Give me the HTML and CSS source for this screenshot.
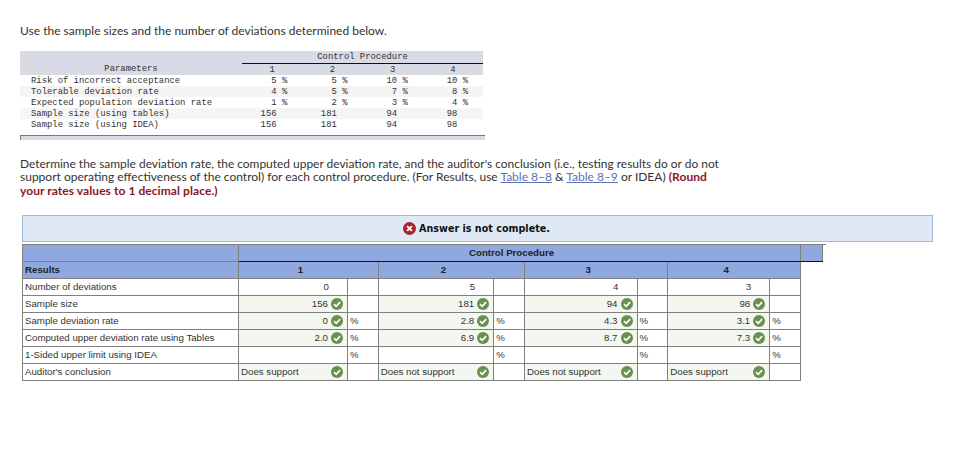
FILE: index.html
```
<!DOCTYPE html>
<html lang="en">
<head>
<meta charset="utf-8">
<title>Control procedure results</title>
<link rel="stylesheet" href="styles.css">
</head>
<body>
<svg class="defs" width="0" height="0" aria-hidden="true">
  <symbol id="ok" viewBox="0 0 12 12">
    <circle cx="6" cy="6" r="6" fill="#68904f"/>
    <path d="M3 6.2 5.2 8.3 9.1 4.1" fill="none" stroke="#fff" stroke-width="1.7"/>
  </symbol>
  <symbol id="no" viewBox="0 0 12 12">
    <circle cx="6" cy="6" r="6" fill="#a8232f"/>
    <path d="M3.8 3.8 8.2 8.2M8.2 3.8 3.8 8.2" fill="none" stroke="#fff" stroke-width="1.8"/>
  </symbol>
</svg>
<main class="page">
  <p class="intro">Use the sample sizes and the number of deviations determined below.</p>

  <table class="params">
    <colgroup><col class="p-label"><col class="p-num"><col class="p-num"><col class="p-num"><col class="p-num"></colgroup>
    <thead>
      <tr class="shade"><th></th><th colspan="4" class="p-group">Control Procedure</th></tr>
      <tr class="shade"><th>Parameters</th><th>1</th><th>2</th><th>3</th><th>4</th></tr>
    </thead>
    <tbody>
      <tr><td>Risk of incorrect acceptance</td><td>5 %</td><td>5 %</td><td>10 %</td><td>10 %</td></tr>
      <tr class="stripe"><td>Tolerable deviation rate</td><td>4 %</td><td>5 %</td><td>7 %</td><td>8 %</td></tr>
      <tr><td>Expected population deviation rate</td><td>1 %</td><td>2 %</td><td>3 %</td><td>4 %</td></tr>
      <tr class="stripe"><td>Sample size (using tables)</td><td>156  </td><td>181  </td><td>94  </td><td>98  </td></tr>
      <tr><td>Sample size (using IDEA)</td><td>156  </td><td>181  </td><td>94  </td><td>98  </td></tr>
    </tbody>
  </table>
  <div class="params-foot"></div>

  <p class="question"><span class="q-first">Determine the sample deviation rate, the computed upper deviation rate, and the auditor's conclusion (i.e., testing results do or do not</span><br>support operating effectiveness of the control) for each control procedure. (For Results, use <a href="#t8">Table 8–8</a> &amp; <a href="#t9">Table 8–9</a> or IDEA) <strong>(Round<br>your rates values to 1 decimal place.)</strong></p>

  <div class="banner"><svg class="icon-no"><use href="#no"/></svg><span>Answer is not complete.</span></div>

  <table class="results">
    <colgroup>
      <col class="c-label">
      <col class="c-v1"><col class="c-u">
      <col class="c-v2"><col class="c-u">
      <col class="c-v3"><col class="c-u">
      <col class="c-v4"><col class="c-u">
      <col class="c-extra">
    </colgroup>
    <thead>
      <tr>
        <th></th>
        <th colspan="8" class="group">Control Procedure</th>
        <th class="group extra"></th>
      </tr>
      <tr>
        <th class="left">Results</th>
        <th colspan="2" class="num-head">1</th>
        <th colspan="2" class="num-head">2</th>
        <th colspan="2" class="num-head">3</th>
        <th colspan="2" class="num-head">4</th>
      </tr>
    </thead>
    <tbody>
      <tr>
        <td>Number of deviations</td>
        <td class="val plain">0</td><td></td>
        <td class="val plain">5</td><td></td>
        <td class="val plain">4</td><td></td>
        <td class="val plain">3</td><td></td>
      </tr>
      <tr>
        <td>Sample size</td>
        <td class="val good"><div class="fill"><span>156</span><svg class="icon-ok"><use href="#ok"/></svg></div></td><td></td>
        <td class="val good"><div class="fill"><span>181</span><svg class="icon-ok"><use href="#ok"/></svg></div></td><td></td>
        <td class="val good"><div class="fill"><span>94</span><svg class="icon-ok"><use href="#ok"/></svg></div></td><td></td>
        <td class="val good"><div class="fill"><span>98</span><svg class="icon-ok"><use href="#ok"/></svg></div></td><td></td>
      </tr>
      <tr>
        <td>Sample deviation rate</td>
        <td class="val good"><div class="fill"><span>0</span><svg class="icon-ok"><use href="#ok"/></svg></div></td><td class="unit">%</td>
        <td class="val good"><div class="fill"><span>2.8</span><svg class="icon-ok"><use href="#ok"/></svg></div></td><td class="unit">%</td>
        <td class="val good"><div class="fill"><span>4.3</span><svg class="icon-ok"><use href="#ok"/></svg></div></td><td class="unit">%</td>
        <td class="val good"><div class="fill"><span>3.1</span><svg class="icon-ok"><use href="#ok"/></svg></div></td><td class="unit">%</td>
      </tr>
      <tr>
        <td>Computed upper deviation rate using Tables</td>
        <td class="val good"><div class="fill"><span>2.0</span><svg class="icon-ok"><use href="#ok"/></svg></div></td><td class="unit">%</td>
        <td class="val good"><div class="fill"><span>6.9</span><svg class="icon-ok"><use href="#ok"/></svg></div></td><td class="unit">%</td>
        <td class="val good"><div class="fill"><span>8.7</span><svg class="icon-ok"><use href="#ok"/></svg></div></td><td class="unit">%</td>
        <td class="val good"><div class="fill"><span>7.3</span><svg class="icon-ok"><use href="#ok"/></svg></div></td><td class="unit">%</td>
      </tr>
      <tr>
        <td>1-Sided upper limit using IDEA</td>
        <td></td><td class="unit">%</td>
        <td></td><td class="unit">%</td>
        <td></td><td class="unit">%</td>
        <td></td><td class="unit">%</td>
      </tr>
      <tr>
        <td>Auditor's conclusion</td>
        <td class="val good"><div class="fill spread"><span>Does support</span><svg class="icon-ok"><use href="#ok"/></svg></div></td><td></td>
        <td class="val good"><div class="fill spread"><span>Does not support</span><svg class="icon-ok"><use href="#ok"/></svg></div></td><td></td>
        <td class="val good"><div class="fill spread"><span>Does not support</span><svg class="icon-ok"><use href="#ok"/></svg></div></td><td></td>
        <td class="val good"><div class="fill spread"><span>Does support</span><svg class="icon-ok"><use href="#ok"/></svg></div></td><td></td>
      </tr>
    </tbody>
  </table>
</main>
</body>
</html>
```
FILE: styles.css
```
* { box-sizing: border-box; }
html, body { margin: 0; padding: 0; background: #fff; }
body { font-family: "Lato", "Liberation Sans", sans-serif; color: #333; overflow: hidden; }
.defs { display: block; height: 0; }
.page { width: 974px; height: 468px; padding: 24px 0 0 20px; }

.intro { margin: 0; font-size: 12px; line-height: 14px; height: 14px; }

.params {
  margin-top: 13px;
  width: 463px;
  border-collapse: collapse;
  table-layout: fixed;
  font-family: "Liberation Mono", monospace;
  font-size: 8.9px;
  line-height: 10px;
  color: #333;
  white-space: pre;
}
.p-label { width: 222px; }
.p-num { width: 60.25px; }
.params th, .params td { padding: 1px 0 0; height: 11px; font-weight: 400; }
.params thead th { text-align: center; }
.params thead .p-group { border-bottom: 1px solid #111; height: 12px; }
.params tbody td { text-align: right; padding-right: 15px; }
.params tbody td:first-child { text-align: left; padding: 1px 0 0 11px; }
.shade { background: #d8dbe3; }
.stripe { background: #f5f5f5; }
.params-foot {
  margin-top: 5px;
  width: 465px;
  height: 5px;
  background: #d8dbe3;
  border-top: 1px solid #777;
  border-left: 1px solid #777;
}

.question { margin: 17px 0 0; font-size: 12px; line-height: 13.5px; height: 41px; width: 760px; }
.q-first { font-size: 11.94px; }
.question a { color: #5a72b5; text-decoration: underline; }
.question strong { color: #8c1526; font-weight: 700; letter-spacing: 0.07px; }

.banner {
  margin: 17px 0 0 2px;
  width: 911px;
  height: 27px;
  display: flex;
  align-items: center;
  justify-content: center;
  gap: 3px;
  padding-right: 2px;
  background: #dfe9f6;
  border: 1px solid #a4b7db;
  font-family: "DejaVu Sans", sans-serif;
  font-size: 9.6px;
  font-weight: 700;
  color: #111;
}
.icon-no { width: 13px; height: 13px; flex: none; }

.results {
  margin: 2px 0 0 2px;
  border-collapse: collapse;
  table-layout: fixed;
  width: 799.5px;
  font-family: "Liberation Sans", Arial, sans-serif;
  font-size: 9.7px;
  line-height: 14px;
  color: #333;
}
.c-label { width: 216px; }
.c-v1 { width: 109px; }
.c-v2 { width: 115.5px; }
.c-v3 { width: 112.5px; }
.c-v4 { width: 102px; }
.c-u { width: 30.75px; }
.c-extra { width: 22px; }
.results th, .results td { height: 17px; padding: 0 2px; border: 1px solid #808080; white-space: nowrap; overflow: visible; }
.results th { background: #8fa8e0; color: #222; font-weight: 700; text-align: center; }
.results th.left { text-align: left; }
.results th.group { padding-right: 18px; border-bottom-color: #111; }
.results th.group.extra { padding: 0; position: relative; }
.results th.group.extra::after {
  content: "";
  position: absolute;
  top: -1px;
  left: 100%;
  width: 4px;
  height: 1px;
  background: #808080;
}
.results th.num-head { padding-right: 18px; }
.results tr:nth-child(2) th { border-top-color: #111; }
.results tr:nth-child(2) th.left { border-top-color: #808080; }
.results td.val { text-align: right; padding: 0; }
.results td.plain { padding-right: 18px; }
.results td.good { background: #f4f7f0; }
.fill { display: flex; justify-content: flex-end; align-items: center; gap: 3px; padding: 0 4px 0 2px; height: 16px; }
.fill.spread { justify-content: space-between; }
.icon-ok { width: 12px; height: 12px; flex: none; }
```
